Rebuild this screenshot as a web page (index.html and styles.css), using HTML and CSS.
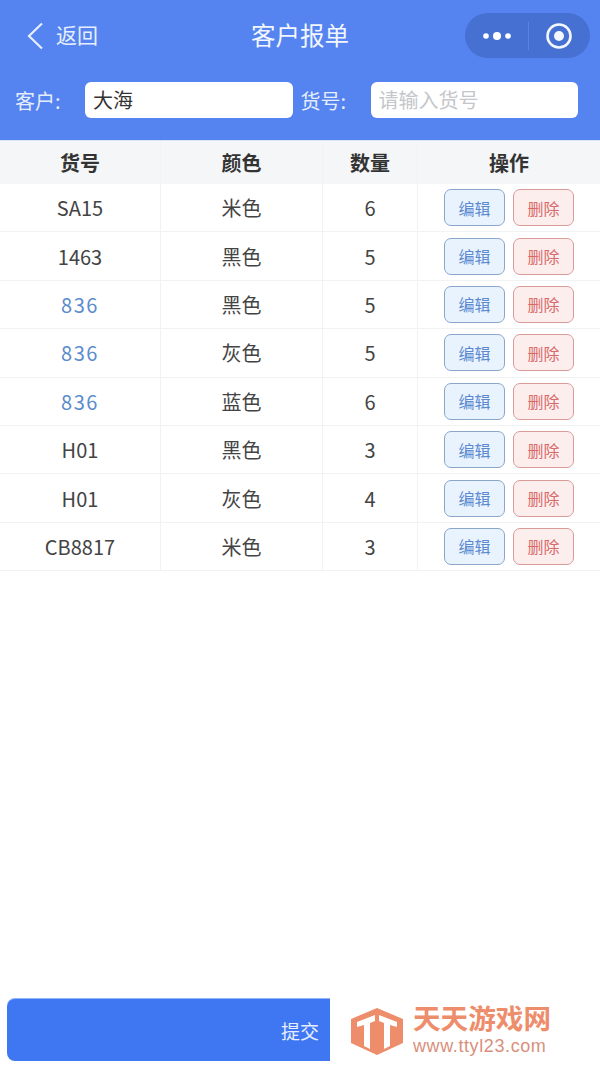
FILE: index.html
```html
<!DOCTYPE html>
<html lang="zh-CN">
  <head>
    <meta charset="UTF-8" />
    <meta name="viewport" content="width=device-width, initial-scale=1.0" />
    <title>客户报单</title>
    <link rel="stylesheet" href="styles.css">
  </head>
  <body>
    <div class="page">
      <!-- 顶部 -->
      <div class="header">
        <div class="nav">
          <div class="back">
            <svg class="back-icon" width="18" height="28" viewBox="0 0 18 28">
              <path d="M16 1.500 L3 14 L16 26.500" fill="none" stroke="#e6eefc" stroke-width="2.200" />
            </svg>
            <span class="back-text">返回</span>
          </div>
          <div class="title">客户报单</div>
          <div class="capsule">
            <svg width="28" height="10" viewBox="0 0 28 10">
              <circle cx="3" cy="5" r="2.800" fill="#fff" />
              <circle cx="14" cy="5" r="4" fill="#fff" />
              <circle cx="25" cy="5" r="2.800" fill="#fff" />
            </svg>
            <span class="capsule-line"></span>
            <svg width="26" height="26" viewBox="0 0 26 26">
              <circle cx="13" cy="13" r="11.500" fill="none" stroke="#f4f7fe" stroke-width="2.600" />
              <circle cx="13" cy="13" r="5" fill="#f4f7fe" />
            </svg>
          </div>
        </div>
        <div class="search">
          <span class="search-label">客户:</span>
          <div class="search-input">大海</div>
          <span class="search-label label-second">货号:</span>
          <div class="search-input placeholder">请输入货号</div>
        </div>
      </div>

      <!-- 表格 -->
      <div class="table">
        <div class="row head">
          <div class="cell">货号</div>
          <div class="cell">颜色</div>
          <div class="cell">数量</div>
          <div class="cell">操作</div>
        </div>
        <div class="row">
          <div class="cell">SA15</div>
          <div class="cell">米色</div>
          <div class="cell">6</div>
          <div class="cell actions"><span class="btn edit">编辑</span><span class="btn del">删除</span></div>
        </div>
        <div class="row">
          <div class="cell">1463</div>
          <div class="cell">黑色</div>
          <div class="cell">5</div>
          <div class="cell actions"><span class="btn edit">编辑</span><span class="btn del">删除</span></div>
        </div>
        <div class="row">
          <div class="cell link">836</div>
          <div class="cell">黑色</div>
          <div class="cell">5</div>
          <div class="cell actions"><span class="btn edit">编辑</span><span class="btn del">删除</span></div>
        </div>
        <div class="row">
          <div class="cell link">836</div>
          <div class="cell">灰色</div>
          <div class="cell">5</div>
          <div class="cell actions"><span class="btn edit">编辑</span><span class="btn del">删除</span></div>
        </div>
        <div class="row">
          <div class="cell link">836</div>
          <div class="cell">蓝色</div>
          <div class="cell">6</div>
          <div class="cell actions"><span class="btn edit">编辑</span><span class="btn del">删除</span></div>
        </div>
        <div class="row">
          <div class="cell">H01</div>
          <div class="cell">黑色</div>
          <div class="cell">3</div>
          <div class="cell actions"><span class="btn edit">编辑</span><span class="btn del">删除</span></div>
        </div>
        <div class="row">
          <div class="cell">H01</div>
          <div class="cell">灰色</div>
          <div class="cell">4</div>
          <div class="cell actions"><span class="btn edit">编辑</span><span class="btn del">删除</span></div>
        </div>
        <div class="row">
          <div class="cell">CB8817</div>
          <div class="cell">米色</div>
          <div class="cell">3</div>
          <div class="cell actions"><span class="btn edit">编辑</span><span class="btn del">删除</span></div>
        </div>
      </div>

      <!-- 底部按钮 -->
      <div class="footer">
        <div class="submit">提交</div>
      </div>

      <!-- 水印 -->
      <div class="watermark">
        <svg class="watermark-logo" width="54" height="47" viewBox="0 0 54 47">
          <path d="M27 0 L53 11 V35 L27 47 L1 35 V11 Z" fill="#ee8d6c" />
          <path d="M7 14 L25 7 V13 L20 15 V41 L14 38 V17 L7 19 Z" fill="#fff" />
          <path d="M29 7 L47 14 V19 L40 17 V38 L34 41 V15 L29 13 Z" fill="#fff" />
        </svg>
        <div class="watermark-text">
          <div class="watermark-name">天天游戏网</div>
          <div class="watermark-url">www.ttyl23.com</div>
        </div>
      </div>
    </div>
  </body>
</html>
```

FILE: styles.css
```css
* {
  box-sizing: border-box;
}

body {
  margin: 0;
  font-family: "Noto Sans CJK SC", "Liberation Sans", sans-serif;
  color: #444;
}

.page {
  position: relative;
  display: flex;
  flex-direction: column;
  height: 1069px;
  overflow: hidden;
  background-color: #fff;
}

/* 顶部 */
.header {
  height: 141px;
  background-color: #5584f0;
  border-bottom: 1px solid #dbe5f8;
  color: #e6eefc;
}

.nav {
  display: flex;
  align-items: center;
  justify-content: space-between;
  height: 71px;
  margin-bottom: 11px;
  padding: 0 10px 0 26px;
}

.back {
  display: flex;
  align-items: center;
  gap: 12px;
  width: 109px;
}

.back-text {
  padding-bottom: 4px;
  font-size: 21px;
  line-height: 28px;
}

.title {
  padding-bottom: 2px;
  font-size: 24.500px;
  color: #f2f6fe;
}

.capsule {
  display: flex;
  align-items: center;
  justify-content: space-between;
  width: 125px;
  height: 45px;
  padding: 0 18px;
  border-radius: 23px;
  background-color: #4670d2;
}

.capsule-line {
  width: 1px;
  height: 28px;
  background-color: #5a82de;
}

.search {
  display: flex;
  align-items: center;
  height: 36px;
  padding: 0 22px 0 15px;
}

.search-label {
  width: 70px;
  font-size: 20px;
}

.label-second {
  margin-left: 8px;
}

.search-input {
  flex: 1;
  height: 36px;
  padding: 0 8px;
  border-radius: 6px;
  background-color: #fff;
  color: #333;
  font-size: 20px;
  line-height: 36px;
}

.placeholder {
  color: #c4c6ca;
}

/* 表格 */
.row {
  display: grid;
  grid-template-columns: 161px 162px 95px 1fr;
  height: 48.400px;
  border-bottom: 1px solid #f1f2f3;
}

.row.head {
  height: 43px;
  border-bottom: none;
  background-color: #f5f6f7;
  color: #333;
  font-weight: bold;
}

.cell {
  display: flex;
  align-items: center;
  justify-content: center;
  border-right: 1px solid #f1f2f3;
  font-size: 20px;
}

.cell:last-child {
  border-right: none;
}

.link {
  color: #5b8ccb;
  letter-spacing: 1.500px;
}

.actions {
  gap: 8px;
}

.btn {
  display: flex;
  align-items: center;
  justify-content: center;
  width: 61px;
  height: 37px;
  border-radius: 7px;
  font-size: 16px;
}

.edit {
  border: 1px solid #8aa6c8;
  background-color: #e9f3fe;
  color: #5c8ad0;
}

.del {
  border: 1px solid #d99a9a;
  background-color: #fdeeee;
  color: #d96a6a;
}

/* 底部 */
.footer {
  margin-top: auto;
  padding: 0 7px 8px;
}

.submit {
  display: flex;
  align-items: center;
  justify-content: center;
  height: 63px;
  border-radius: 8px;
  background-color: #3f76f2;
  border-top: 1px solid #8fb4f8;
  color: #e6eefc;
  font-size: 19px;
}

/* 水印 */
.watermark {
  position: absolute;
  left: 330px;
  top: 998px;
  right: 0;
  bottom: 0;
  display: flex;
  align-items: flex-start;
  gap: 9px;
  padding: 6px 0 0 20px;
  background-color: #fff;
}

.watermark-logo {
  margin-top: 4px;
}

.watermark-name {
  color: #ee8d6c;
  font-family: "Liberation Sans", "Noto Sans CJK SC", sans-serif;
  font-size: 27.600px;
  font-weight: bold;
  line-height: 32px;
}

.watermark-url {
  color: #d98f7c;
  font-family: "Liberation Sans", sans-serif;
  font-size: 18px;
  line-height: 20px;
  letter-spacing: 0.600px;
}
```
